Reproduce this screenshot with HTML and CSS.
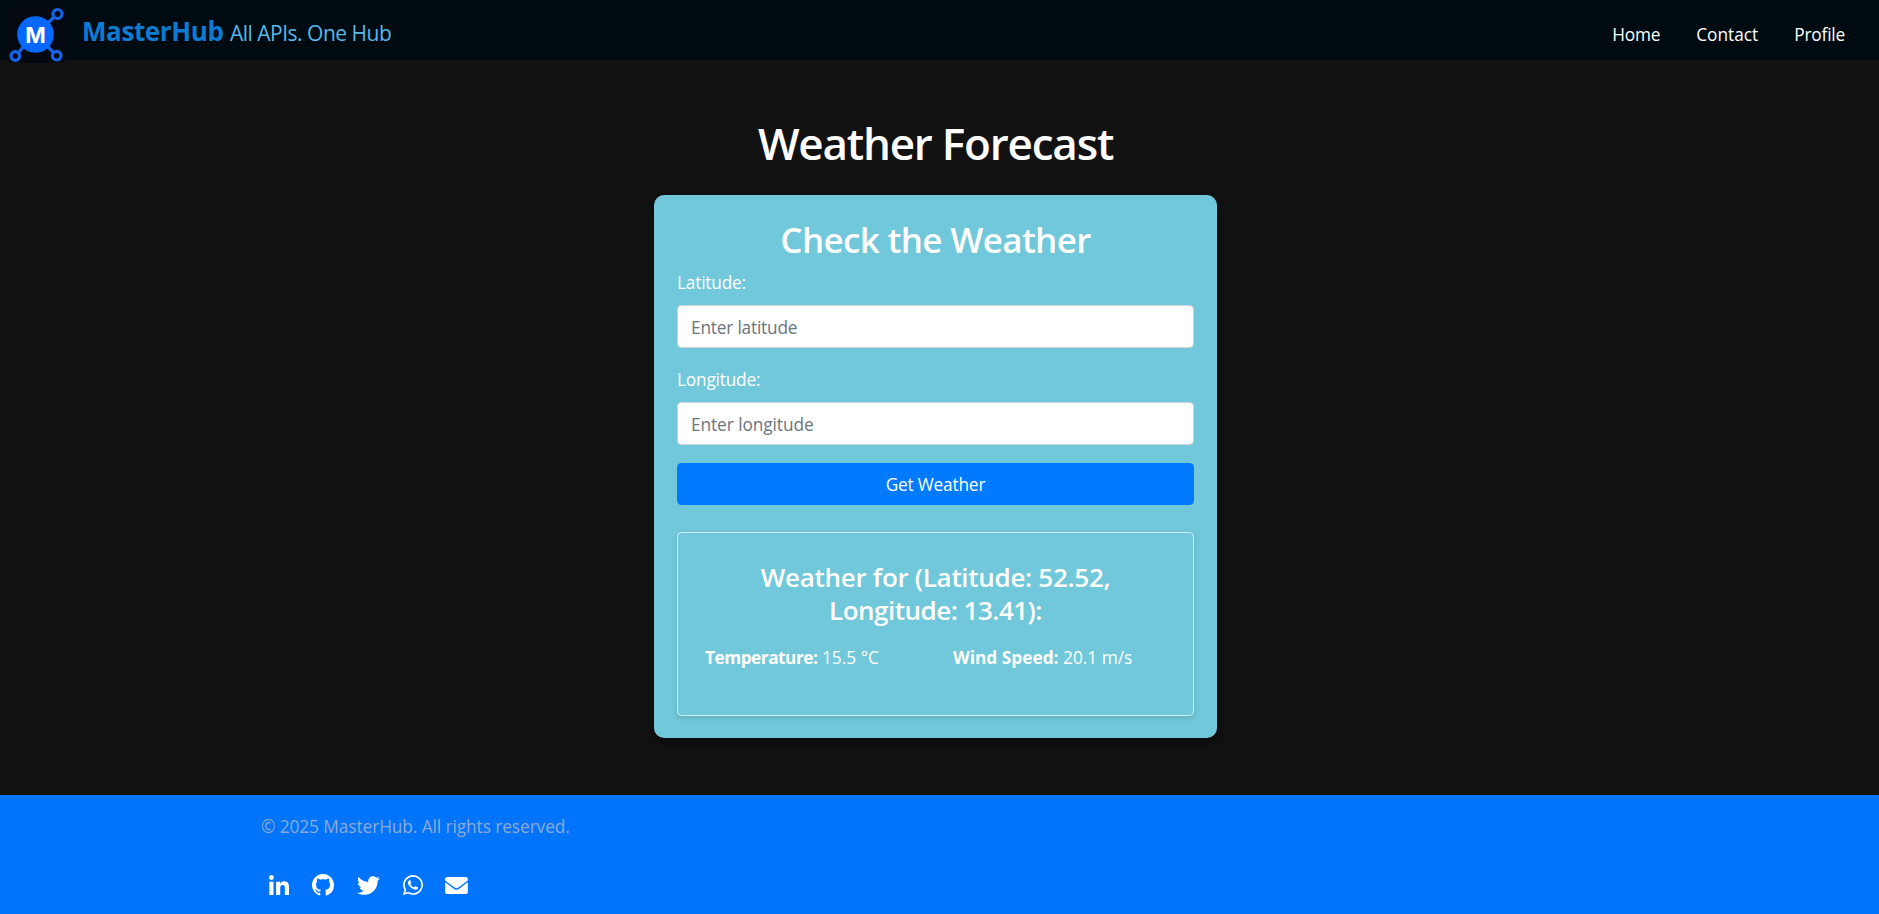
FILE: index.html
```html
<!DOCTYPE html>
<html lang="en">
<head>
<meta charset="utf-8">
<title>MasterHub - Weather Forecast</title>
<link rel="stylesheet" href="styles.css">
</head>
<body>
<header class="navbar">
  <a class="brand" href="#">
    <svg class="logo" viewBox="0 0 57 56" aria-hidden="true">
      <rect width="57" height="56" fill="#050a12"/>
      <g stroke="#1463e8" stroke-width="3.200" fill="none">
        <path d="M40 16l6-6M16 39l-5 6M38 38l7 7"/>
        <circle cx="49.500" cy="7" r="4.500"/>
        <circle cx="7.300" cy="49" r="4.300"/>
        <circle cx="48.700" cy="48.700" r="4.300"/>
      </g>
      <circle cx="27.500" cy="27.500" r="18.300" fill="#0768ff"/>
      <text class="logo-letter" x="27.500" y="36" text-anchor="middle">M</text>
    </svg>
    <span class="brand-name">MasterHub</span>
    <span class="tagline">All APIs. One Hub</span>
  </a>
  <nav class="nav-links">
    <a class="tight" href="#">Home</a>
    <a href="#">Contact</a>
    <a class="tight" href="#">Profile</a>
  </nav>
</header>
<main class="content">
  <h1 class="page-title">Weather Forecast</h1>
  <section class="card">
    <h2 class="card-title">Check the Weather</h2>
    <form>
      <label class="field-label" for="lat">Latitude:</label>
      <input class="field" id="lat" type="text" placeholder="Enter latitude">
      <label class="field-label" for="lon">Longitude:</label>
      <input class="field field-lon" id="lon" type="text" placeholder="Enter longitude">
      <button class="submit" type="button">Get Weather</button>
    </form>
    <div class="result">
      <h3 class="result-title"><span class="line-a">Weather for (Latitude: 52.52,</span><br><span class="line-b">Longitude: 13.41):</span></h3>
      <div class="result-row">
        <p class="temp"><strong>Temperature:</strong> 15.5 °C</p>
        <p class="wind"><strong>Wind Speed:</strong> 20.1 m/s</p>
      </div>
    </div>
  </section>
</main>
<footer class="footer">
  <p class="copyright">© 2025 MasterHub. All rights reserved.</p>
  <div class="social">
    <a href="#" aria-label="LinkedIn"><svg class="i-linkedin" viewBox="0 0 448 448"><path d="M100.280 448H7.400V148.900h92.880zM53.790 108.100C24.090 108.100 0 83.500 0 53.800a53.790 53.790 0 0 1 107.580 0c0 29.700-24.100 54.300-53.790 54.300zM447.900 448h-92.680V302.400c0-34.700-.7-79.200-48.290-79.200-48.290 0-55.690 37.700-55.690 76.700V448h-92.780V148.900h89.080v40.800h1.300c12.400-23.500 42.690-48.300 87.880-48.300 94 0 111.280 61.900 111.280 142.300V448z"/></svg></a>
    <a href="#" aria-label="GitHub"><svg class="i-github" viewBox="0 0 16 16"><path d="M8 0C3.580 0 0 3.580 0 8c0 3.540 2.290 6.530 5.470 7.590.4.070.55-.17.55-.38 0-.19-.01-.82-.01-1.490-2.010.37-2.530-.49-2.690-.94-.09-.23-.48-.94-.82-1.130-.28-.15-.68-.52-.01-.53.63-.01 1.080.58 1.230.82.72 1.210 1.870.87 2.330.66.07-.52.28-.87.51-1.070-1.780-.2-3.640-.89-3.640-3.950 0-.87.31-1.590.82-2.150-.08-.2-.36-1.020.08-2.120 0 0 .67-.21 2.200.82.640-.18 1.320-.27 2-.27s1.360.09 2 .27c1.530-1.040 2.200-.82 2.200-.82.44 1.100.16 1.920.08 2.120.51.56.82 1.270.82 2.150 0 3.070-1.870 3.750-3.650 3.950.29.25.54.73.54 1.480 0 1.070-.01 1.930-.01 2.200 0 .21.15.46.55.38A8.010 8.010 0 0 0 16 8c0-4.420-3.580-8-8-8z"/></svg></a>
    <a href="#" aria-label="Twitter"><svg class="i-twitter" viewBox="0 48 512 416"><path d="M459.370 151.716c.325 4.548.325 9.097.325 13.645 0 138.720-105.583 298.558-298.558 298.558-59.452 0-114.680-17.219-161.137-47.106 8.447.974 16.568 1.299 25.340 1.299 49.055 0 94.213-16.568 130.274-44.832-46.132-.975-84.792-31.188-98.112-72.772 6.498.974 12.995 1.624 19.818 1.624 9.421 0 18.843-1.300 27.614-3.573-48.081-9.747-84.143-51.980-84.143-102.985v-1.299c13.969 7.797 30.214 12.670 47.431 13.319-28.264-18.843-46.781-51.005-46.781-87.391 0-19.492 5.197-37.360 14.294-52.954 51.655 63.675 129.300 105.258 216.365 109.807-1.624-7.797-2.599-15.918-2.599-24.040 0-57.828 46.782-104.934 104.934-104.934 30.213 0 57.502 12.670 76.670 33.137 23.715-4.548 46.456-13.320 66.599-25.340-7.798 24.366-24.366 44.833-46.132 57.827 21.117-2.273 41.584-8.122 60.426-16.243-14.292 20.791-32.161 39.308-52.628 54.253z"/></svg></a>
    <a href="#" aria-label="WhatsApp"><svg class="i-whatsapp" viewBox="0 32 448 448"><path d="M380.900 97.100C339 55.100 283.200 32 223.900 32c-122.400 0-222 99.600-222 222 0 39.100 10.200 77.300 29.600 111L0 480l117.700-30.900c32.400 17.700 68.900 27 106.100 27h.1c122.300 0 224.100-99.600 224.100-222 0-59.300-25.200-115-67.100-157zm-157 341.600c-33.200 0-65.700-8.900-94-25.700l-6.700-4-69.800 18.300L72 359.200l-4.400-7c-18.500-29.400-28.200-63.300-28.200-98.200 0-101.700 82.800-184.500 184.600-184.500 49.300 0 95.600 19.200 130.400 54.100 34.800 34.900 56.200 81.200 56.100 130.500 0 101.800-84.900 184.600-186.600 184.600zm101.200-138.200c-5.500-2.800-32.800-16.200-37.900-18-5.100-1.900-8.800-2.800-12.500 2.800-3.700 5.600-14.300 18-17.600 21.800-3.200 3.700-6.500 4.200-12 1.400-32.600-16.300-54-29.100-75.500-66-5.700-9.800 5.700-9.100 16.300-30.300 1.800-3.700.9-6.900-.5-9.700-1.400-2.800-12.500-30.100-17.100-41.200-4.500-10.800-9.100-9.300-12.500-9.500-3.200-.2-6.900-.2-10.600-.2-3.700 0-9.700 1.400-14.800 6.900-5.100 5.600-19.400 19-19.400 46.300 0 27.300 19.900 53.700 22.600 57.400 2.800 3.700 39.100 59.700 94.800 83.800 35.200 15.200 49 16.500 66.600 13.900 10.700-1.600 32.800-13.400 37.400-26.400 4.600-13 4.600-24.100 3.200-26.400-1.300-2.500-5-3.900-10.500-6.600z"/></svg></a>
    <a href="#" aria-label="Email"><svg class="i-mail" viewBox="0 64 512 384"><path d="M502.300 190.800c3.900-3.100 9.700-.2 9.700 4.700V400c0 26.500-21.500 48-48 48H48c-26.500 0-48-21.500-48-48V195.600c0-5 5.700-7.800 9.700-4.700 22.400 17.400 52.100 39.500 154.100 113.600 21.100 15.400 56.700 47.800 92.200 47.600 35.700.3 72-32.800 92.300-47.600 102-74.100 131.600-96.300 154-113.700zM256 320c23.200.4 56.600-29.200 73.400-41.400 132.700-96.300 142.800-104.700 173.400-128.700 5.800-4.500 9.200-11.500 9.200-18.900v-19c0-26.500-21.500-48-48-48H48c-26.500 0-48 21.500-48 48v19c0 7.400 3.400 14.300 9.200 18.900 30.600 23.900 40.700 32.400 173.400 128.700 16.800 12.200 50.200 41.800 73.400 41.400z"/></svg></a>
  </div>
</footer>
</body>
</html>
```
FILE: styles.css
```css
* { box-sizing: border-box; }
body {
  margin: 0;
  height: 914px;
  display: flex;
  flex-direction: column;
  overflow: hidden;
  background: #121212;
  color: #fff;
  font: 17.3px/27px "Open Sans", "Noto Sans", sans-serif;
}
a { color: inherit; text-decoration: none; }
h1, h2, h3, p { margin: 0; font-weight: 600; }
.navbar {
  height: 60px;
  flex: none;
  display: flex;
  justify-content: space-between;
  padding: 0 34px 0 8px;
  background: #000b11;
}
.brand { display: flex; align-items: flex-start; white-space: nowrap; }
.logo { width: 57px; height: 56px; margin-top: 7px; flex: none; }
.logo-letter { font: 700 22px Inter, sans-serif; fill: #fff; }
.brand-name {
  margin: 11px 0 0 17px;
  width: 148px;
  font-size: 26px;
  line-height: 40px;
  font-weight: 700;
  letter-spacing: -0.4px;
  color: #0d7ad4;
}
.tagline { margin-top: 13px; font-size: 21px; line-height: 40px; letter-spacing: -0.5px; color: #58b8ea; }
.nav-links { display: flex; gap: 36px; padding-top: 21px; }
.nav-links .tight { letter-spacing: -0.2px; }
.content { height: 735px; flex: none; padding: 58px 8px 0 0; text-align: center; }
.page-title { height: 77px; font-size: 44px; line-height: 51px; letter-spacing: -1.2px; }
.card {
  width: 563px;
  height: 543px;
  margin: 0 auto;
  padding: 23px;
  border-radius: 10px;
  background: #70c8da;
  box-shadow: 0 4px 12px rgba(0, 0, 0, .5);
}
.card-title { font-size: 35px; line-height: 44px; letter-spacing: -0.65px; }
.field-label { display: block; text-align: left; line-height: 27px; margin: 7px 0 9px; letter-spacing: -0.2px; }
.field {
  display: block;
  width: 100%;
  height: 43px;
  padding: 2px 13px 0;
  margin: 0 0 18px;
  border: 1px solid #ced4da;
  border-radius: 4.500px;
  background: #fff;
  font: inherit;
  letter-spacing: -0.2px;
  outline: 0;
}
.field-lon { letter-spacing: -0.08px; }
.field::placeholder { color: #6c757d; opacity: 1; }
.submit {
  display: block;
  width: 100%;
  height: 42px;
  padding: 0;
  border: 0;
  border-radius: 4.500px;
  background: #007bff;
  color: #fff;
  font: inherit;
  letter-spacing: -0.2px;
}
.result {
  height: 184px;
  margin-top: 27px;
  padding: 28px 27px 0;
  border: 1px solid #cfedf3;
  border-radius: 4.500px;
  box-shadow: 0 2px 5px rgba(0, 0, 0, .12);
}
.result-title { font-size: 26px; line-height: 33px; }
.line-a { letter-spacing: -0.3px; }
.line-b { letter-spacing: -0.5px; }
.result-row { display: grid; grid-template-columns: 248px 1fr; text-align: left; margin-top: 17px; }
.result-row p { font-weight: 400; white-space: nowrap; }
.temp strong { letter-spacing: -0.5px; }
.footer { flex: 1; padding: 18px 0 0 261px; background: #0075fb; }
.copyright { font-weight: 400; letter-spacing: -0.08px; color: #8faad0; }
.social { display: flex; align-items: center; height: 24px; margin: 33px 0 0 8px; }
.social a { display: flex; }
.social svg { display: block; fill: #fff; }
.i-linkedin { width: 20px; height: 20px; margin-right: 23px; }
.i-github { width: 22px; height: 22px; margin-right: 23px; }
.i-twitter { width: 23px; height: 19px; margin-right: 23px; }
.i-whatsapp { width: 20px; height: 20px; margin-right: 22px; }
.i-mail { width: 23px; height: 17px; }
```
